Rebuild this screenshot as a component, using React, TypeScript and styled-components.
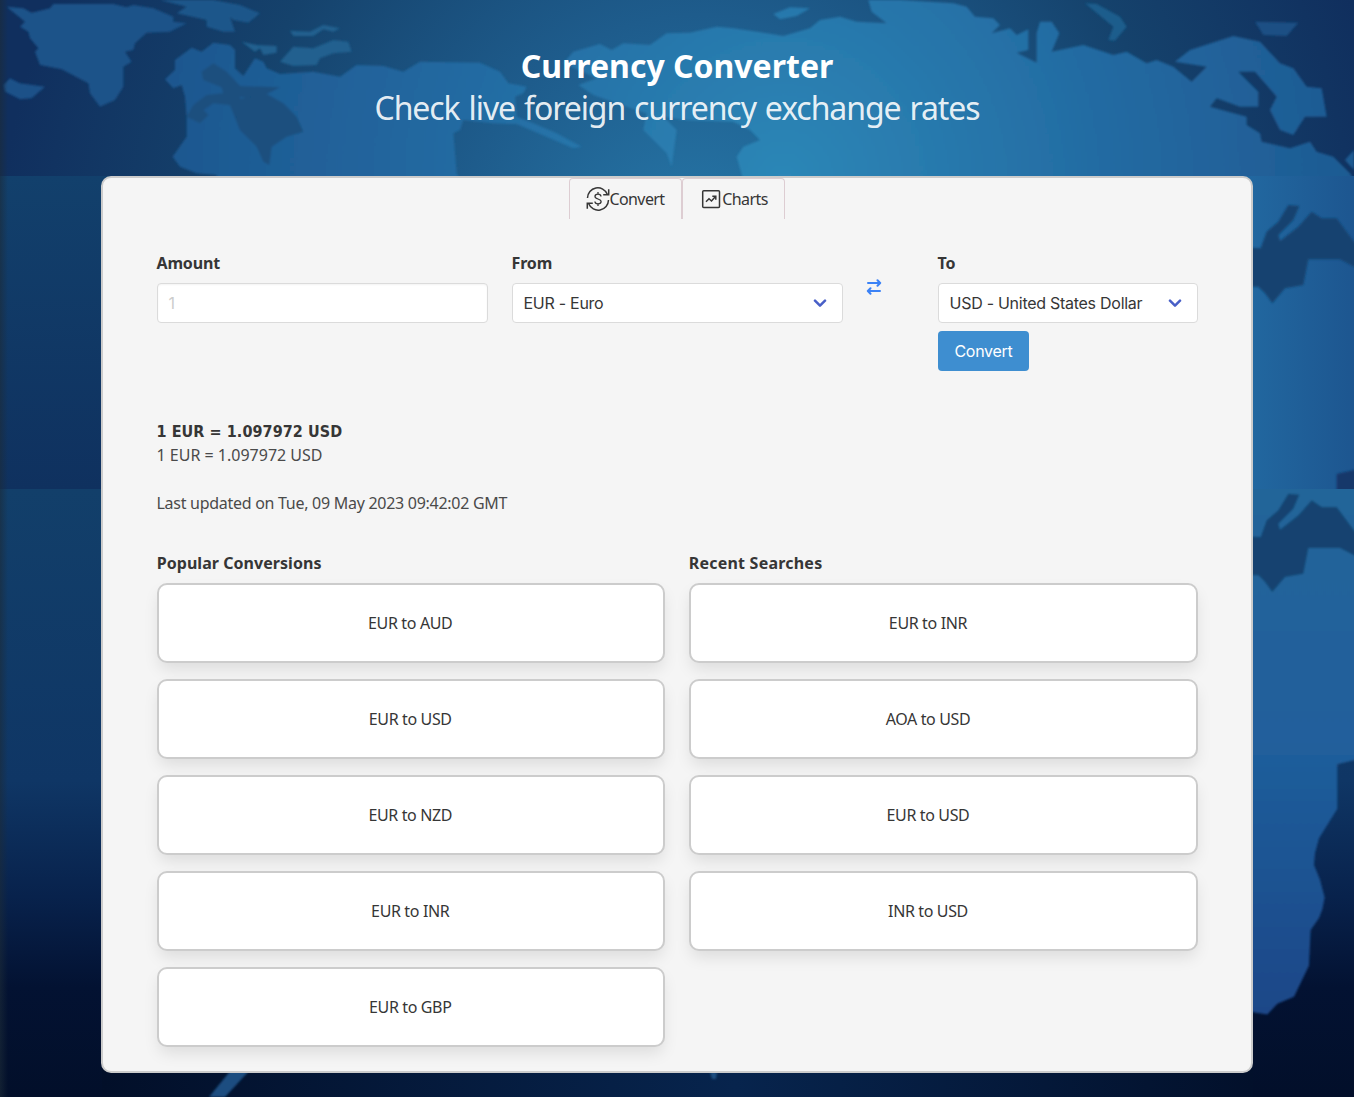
import React from "react";
import styled, { createGlobalStyle } from "styled-components";

const GlobalStyle = createGlobalStyle`
  *, *::before, *::after { box-sizing: border-box; }
  html, body { margin: 0; padding: 0; }
  body {
    font-family: "Noto Sans", "DejaVu Sans Condensed", sans-serif;
    font-size: 16px;
    line-height: 24px;
    color: #4a4a4a;
    background: #03102f;
    overflow: hidden;
  }
`;

const Page = styled.div`
  position: relative;
  isolation: isolate;
  height: 1097px;
  overflow: hidden;
`;

const Backdrop = styled.svg`
  position: absolute;
  inset: 0;
  z-index: -1;
  display: block;
`;

const Hero = styled.header`
  height: 176px;
  padding-top: 48px;
  text-align: center;
`;

const Title = styled.h1`
  margin: 0;
  font-size: 32px;
  line-height: 36px;
  font-weight: 700;
  color: #fff;
`;

const Subtitle = styled.p`
  margin: 3px 0 0;
  font-size: 32px;
  line-height: 42px;
  letter-spacing: -1.08px;
  word-spacing: 1.7px;
  color: rgba(255, 255, 255, 0.9);
`;

const Panel = styled.main`
  width: 1152px;
  height: 897px;
  margin: 0 auto;
  padding: 0 53px 24px 54px;
  border: 2px solid #ccc;
  border-radius: 10px;
  background: #f5f5f5;
`;

const Tabs = styled.nav`
  display: flex;
  justify-content: center;
  height: 41px;
  margin-left: -2px;
`;

const Tab = styled.a<{ $width: number }>`
  display: flex;
  align-items: center;
  justify-content: center;
  width: ${(p) => p.$width}px;
  border: 1px solid #ddcdd2;
  border-bottom: 0;
  border-radius: 4px 4px 0 0;
  letter-spacing: -0.6px;
  color: #363636;
  & > svg { margin: 0 -1px 0 1px; }
`;

const Form = styled.form`
  display: grid;
  grid-template-columns: 331px 331px 47px 260px;
  column-gap: 24px;
  height: 168px;
  padding-top: 32px;
`;

const Field = styled.div`
  display: flex;
  flex-direction: column;
`;

const Label = styled.label`
  height: 24px;
  margin-bottom: 8px;
  font-weight: 700;
  letter-spacing: -0.15px;
  text-indent: -0.5px;
  color: #363636;
`;

const Control = styled.div<{ $muted?: boolean }>`
  display: flex;
  align-items: center;
  justify-content: space-between;
  height: 40px;
  padding: 0 15px 0 10.5px;
  border: 1px solid #dbdbdb;
  border-radius: 4px;
  background: #fff;
  font-family: Inter, sans-serif;
  letter-spacing: -0.27px;
  color: ${(p) => (p.$muted ? "#cccccc" : "#363636")};
  box-shadow: ${(p) => (p.$muted ? "inset 0 1px 2px rgba(10,10,10,.05)" : "none")};
`;

const Swap = styled.div`
  padding-top: 26px;
  margin-left: -1.5px;
`;

const Submit = styled.button`
  width: 91px;
  height: 40px;
  margin-top: 8px;
  padding: 0;
  border: 0;
  border-radius: 4px;
  background: #3e8ed0;
  color: #fff;
  font: 16px/24px Inter, sans-serif;
  letter-spacing: -0.27px;
`;

const Result = styled.section`
  height: 164px;
  padding-top: 32px;
`;

const Line = styled.p`
  margin: 0;
  text-indent: -0.5px;
`;

const Rate = styled(Line)`
  height: 24px;
  padding-top: 1px;
  font-family: "DejaVu Sans Condensed", "Noto Sans", sans-serif;
  font-stretch: condensed;
  font-weight: 700;
  letter-spacing: 0.07px;
  color: #363636;
`;

const Updated = styled(Line)`
  margin-top: 24px;
  letter-spacing: -0.28px;
`;

const Lists = styled.section`
  display: grid;
  grid-template-columns: 508px 509px;
  column-gap: 24px;
`;

const List = styled.div`
  display: flex;
  flex-direction: column;
`;

const Heading = styled.h2<{ $spacing: number }>`
  margin: 0 0 8px;
  font-size: 16px;
  line-height: 24px;
  letter-spacing: ${(p) => p.$spacing}px;
  text-indent: -0.3px;
  color: #363636;
`;

const Pair = styled.a<{ $inset?: number }>`
  display: flex;
  align-items: center;
  justify-content: center;
  height: 80px;
  margin-bottom: 16px;
  padding-right: ${(p) => p.$inset ?? 1.5}px;
  border: 2px solid #ccc;
  border-radius: 10px;
  background: #fff;
  letter-spacing: -0.36px;
  color: #363636;
  box-shadow: 0 8px 16px -2px rgba(10, 10, 10, 0.1);
`;

const popular = ["EUR to AUD", "EUR to USD", "EUR to NZD", "EUR to INR", "EUR to GBP"];
const recent = ["EUR to INR", "AOA to USD", "EUR to USD", "INR to USD"];

const EURASIA =
  "495,238 525,210 525,180 575,143 605,155 640,128 690,135 705,150 705,205 730,228 765,175 790,185 800,205 840,222 940,215 1020,230 1070,195 1150,198 1210,215 1260,185 1440,188 1500,215 1525,250 1580,260 1570,280 1545,290 1550,350 1600,370 1670,400 1745,440 1720,445 1550,372 1480,370 1390,360 1380,390 1360,400 1370,520 1380,540 650,540 650,525 590,520 540,500 518,470 560,410 560,350 555,290 545,255 520,265";
const AMERICA =
  "1690,190 1720,155 1800,132 1835,150 1870,130 1950,135 2000,100 2070,98 2150,80 2200,85 2300,100 2350,108 2430,85 2460,60 2520,50 2570,65 2660,70 2615,35 2605,0 2700,0 2860,10 2900,20 2925,50 2980,55 3000,75 2975,100 3030,85 3050,105 3085,88 3085,150 3050,158 3110,188 3110,100 3120,65 3155,65 3178,100 3155,155 3250,135 3340,165 3380,155 3440,190 3470,180 3520,200 3575,245 3620,200 3525,185 3570,150 3700,108 3780,125 3840,190 3880,205 3920,260 3965,265 3980,350 3915,350 3880,405 3840,390 3810,330 3830,290 3765,215 3715,215 3775,275 3775,320 3720,320 3650,295 3630,320 3740,350 3740,375 3780,400 3785,425 3870,445 3930,425 3950,455 4000,470 4050,520 4062,540 2230,540 2210,470 2230,440 2280,420 2250,390 2200,365 2050,360 1990,350 2030,390 2015,500 2000,460 1930,390 1940,340 1850,310 1780,285 1735,255 1790,235";
const GREENLAND =
  "20,20 70,25 95,38 150,25 160,12 340,12 380,22 400,15 460,25 520,50 520,65 560,70 510,95 440,98 405,130 400,150 375,155 395,185 370,200 370,260 345,300 300,320 270,280 265,250 185,208 120,195 105,155 115,145 90,115 85,95 60,80 75,65";
const INLET =
  "0,232 62,235 80,185 115,155 145,105 178,108 160,150 115,195 120,213 175,170 215,125 245,145 290,145 342,215 370,240 370,300 342,290 300,268 205,268 190,345 135,355 97,400 75,370 55,350 0,350";

const WorldMap = () => (
  <Backdrop width="1354" height="1097" viewBox="0 0 1354 1097" aria-hidden="true">
    <defs>
      <radialGradient id="sea" gradientUnits="userSpaceOnUse" cx="700" cy="260" r="700">
        <stop offset="0" stopColor="#2779aa" />
        <stop offset=".35" stopColor="#1e5c8c" />
        <stop offset=".68" stopColor="#15426c" />
        <stop offset="1" stopColor="#102f5e" />
      </radialGradient>
      <radialGradient id="land" gradientUnits="userSpaceOnUse" cx="2350" cy="540" r="2150">
        <stop offset="0" stopColor="#2d87b7" />
        <stop offset=".5" stopColor="#2268a0" />
        <stop offset="1" stopColor="#1c5189" />
      </radialGradient>
      <linearGradient id="west" x2="0" y2="1">
        <stop offset="0" stopColor="#12406c" />
        <stop offset="1" stopColor="#0f315f" />
      </linearGradient>
      <linearGradient id="deep" x2="0" y2="1">
        <stop offset="0" stopColor="#123f6a" />
        <stop offset=".48" stopColor="#0f3665" />
        <stop offset=".67" stopColor="#08224c" />
        <stop offset=".82" stopColor="#031232" />
        <stop offset="1" stopColor="#020f2a" />
      </linearGradient>
      <linearGradient id="coast" x2="0" y2="1">
        <stop offset="0" stopColor="#206699" />
        <stop offset=".5" stopColor="#205f9c" />
        <stop offset="1" stopColor="#1c4788" />
      </linearGradient>
      <linearGradient id="east" x2="1" y2="0">
        <stop offset="0" stopColor="#2269a1" />
        <stop offset="1" stopColor="#1d5690" />
      </linearGradient>
      <linearGradient id="floor" x2="1" y2="0">
        <stop offset="0" stopColor="#020f29" />
        <stop offset=".55" stopColor="#07244d" />
        <stop offset="1" stopColor="#02102b" />
      </linearGradient>
      <linearGradient id="edge" x2="1" y2="0">
        <stop offset="0" stopColor="#1c2b38" stopOpacity=".6" />
        <stop offset="1" stopColor="#1c2b38" stopOpacity="0" />
      </linearGradient>
      <filter id="soft" x="-2%" y="-2%" width="104%" height="104%">
        <feGaussianBlur stdDeviation="1" />
      </filter>
      <clipPath id="top"><rect width="1354" height="176" /></clipPath>
      <clipPath id="mid"><rect y="176" width="1354" height="313" /></clipPath>
      <clipPath id="low"><rect y="489" width="1354" height="608" /></clipPath>
    </defs>
    <g clipPath="url(#top)">
      <rect width="1354" height="176" fill="url(#sea)" />
      <g filter="url(#soft)">
        <g transform="scale(.33333)">
          <polygon points={GREENLAND} fill="#1d5389" />
          <polygon points="10,255 30,235 60,250 135,260 95,295 60,298 15,275" fill="#1b5188" />
          <polygon points="480,0 640,0 720,15 780,40 745,68 700,60 690,50 705,95 670,95 620,80 620,60 530,40 560,20" fill="#1d568a" />
          <g fill="#20608f">
            <polygon points="870,92 930,95 970,75 1020,85 1000,95 970,88 940,108 880,108" />
            <polygon points="840,185 880,140 940,145 1000,120 1045,125 1055,155 1000,160 960,175 950,195 880,198" />
            <polygon points="725,125 770,135 830,138 830,158 790,165 780,145 765,155" />
          </g>
          <g fill="url(#land)">
            <polygon points={EURASIA} />
            <polygon points={AMERICA} />
            <polygon points="2320,42 2370,22 2430,25 2390,48 2340,58" />
            <polygon points="3255,10 3290,12 3360,50 3380,80 3345,122 3325,120 3340,80" fill="#1c5d8c" />
            <polygon points="3765,65 3895,68 3860,108 3790,105" fill="#1b4f84" />
            <polygon points="4035,480 4062,450 4062,510" />
          </g>
          <g fill="#1a4f7e">
            <polygon points="605,215 640,190 680,215 720,258 840,262 800,282 760,298 720,290 720,390 690,315 640,310 610,330 625,345 600,370 560,350 580,315 620,285 670,280 665,262 610,240" />
            <polygon points="700,300 800,282 850,310 890,350 910,395 860,410 815,440 808,495 790,485 770,440 720,390" />
          </g>
        </g>
      </g>
    </g>
    <g clipPath="url(#mid)">
      <rect y="176" width="600" height="313" fill="url(#west)" />
      <rect x="1240" y="176" width="114" height="313" fill="url(#east)" />
      <g filter="url(#soft)" fill="#154370">
        <g transform="translate(1240 170) scale(.33333)">
          <polygon points={INLET} />
          <polygon points="290,912 342,900 370,900 370,980 290,980" fill="#12376a" />
        </g>
      </g>
    </g>
    <g clipPath="url(#low)">
      <rect y="489" width="1354" height="608" fill="url(#deep)" />
      <rect x="102" y="1060" width="1151" height="37" fill="url(#floor)" />
      <g filter="url(#soft)">
        <g transform="translate(1244 170) scale(.33333 .5914)">
          <polygon
            fill="url(#coast)"
            points="-20,500 370,500 370,993 330,998 280,1005 280,1080 258,1100 225,1130 213,1155 210,1175 228,1200 242,1230 235,1250 225,1265 200,1285 197,1320 195,1345 150,1398 100,1410 70,1428 -20,1420"
          />
        </g>
        <polygon points={INLET} transform="translate(1240 458.7) scale(.33333)" fill="#154370" />
      </g>
      <g filter="url(#soft)" fill="#1b4d80">
        <polygon points="231,1070 250,1070 225,1097 209,1097" />
        <polygon points="710,1072 717,1072 716,1079 712,1079" />
      </g>
    </g>
    <rect width="8" height="1097" fill="url(#edge)" />
  </Backdrop>
);

const ExchangeIcon = () => (
  <svg width="24" height="24" viewBox="0 0 24 24" fill="none" stroke="#363636" strokeWidth="1.5">
    <path d="M1.5 11A10.3 10.3 0 0 1 21.3 7.2M22.5 13A10.3 10.3 0 0 1 2.7 16.8" />
    <path d="M22.7 2.3V7.7H17.2M1.3 21.7V16.3H6.8" />
    <path d="M15 9.5C14.9 8 13.7 7.2 12 7.2S9 8 9 9.4 10.2 11.4 12 12s3.1 1.1 3.1 2.5-1.4 2.3-3.1 2.3-3-.8-3.1-2.3M12 5v2.2M12 16.8V19" strokeWidth="1.3" />
  </svg>
);

const ChartIcon = () => (
  <svg width="24" height="24" viewBox="0 0 24 24" fill="none" stroke="#363636" strokeWidth="1.5">
    <rect x="3.7" y="3.7" width="16.8" height="16.8" rx="1" />
    <path d="M7 14.7L10 11.7L12.5 14L16.3 9.7M13.3 9.2H16.8V12.7" />
  </svg>
);

const Chevron = () => (
  <svg width="14" height="9" viewBox="0 0 14 9" fill="none" stroke="#485fc7" strokeWidth="2.5" strokeLinecap="round" strokeLinejoin="round">
    <path d="M2 1.7L7 6.7L12 1.7" />
  </svg>
);

const SwapIcon = () => (
  <svg width="16" height="16" viewBox="0 0 16 16" fill="none" stroke="#3b82f6" strokeWidth="2" strokeLinecap="round" strokeLinejoin="round">
    <path d="M2 4H14M11.5 1.3L14.2 4L11.5 6.7M14 12H2M4.5 9.3L1.8 12L4.5 14.7" />
  </svg>
);

export default function App() {
  return (
    <Page>
      <GlobalStyle />
      <WorldMap />
      <Hero>
        <Title>Currency Converter</Title>
        <Subtitle>Check live foreign currency exchange rates</Subtitle>
      </Hero>
      <Panel>
        <Tabs>
          <Tab $width={113}><ExchangeIcon />Convert</Tab>
          <Tab $width={103}><ChartIcon />Charts</Tab>
        </Tabs>
        <Form>
          <Field>
            <Label>Amount</Label>
            <Control $muted>1</Control>
          </Field>
          <Field>
            <Label>From</Label>
            <Control>EUR - Euro<Chevron /></Control>
          </Field>
          <Swap><SwapIcon /></Swap>
          <Field>
            <Label>To</Label>
            <Control>USD - United States Dollar<Chevron /></Control>
            <Submit type="button">Convert</Submit>
          </Field>
        </Form>
        <Result>
          <Rate>1 EUR = 1.097972 USD</Rate>
          <Line>1 EUR = 1.097972 USD</Line>
          <Updated>Last updated on Tue, 09 May 2023 09:42:02 GMT</Updated>
        </Result>
        <Lists>
          <List>
            <Heading $spacing={0.05}>Popular Conversions</Heading>
            {popular.map((p) => <Pair key={p}>{p}</Pair>)}
          </List>
          <List>
            <Heading $spacing={0.22}>Recent Searches</Heading>
            {recent.map((p) => <Pair key={p} $inset={31}>{p}</Pair>)}
          </List>
        </Lists>
      </Panel>
    </Page>
  );
}
